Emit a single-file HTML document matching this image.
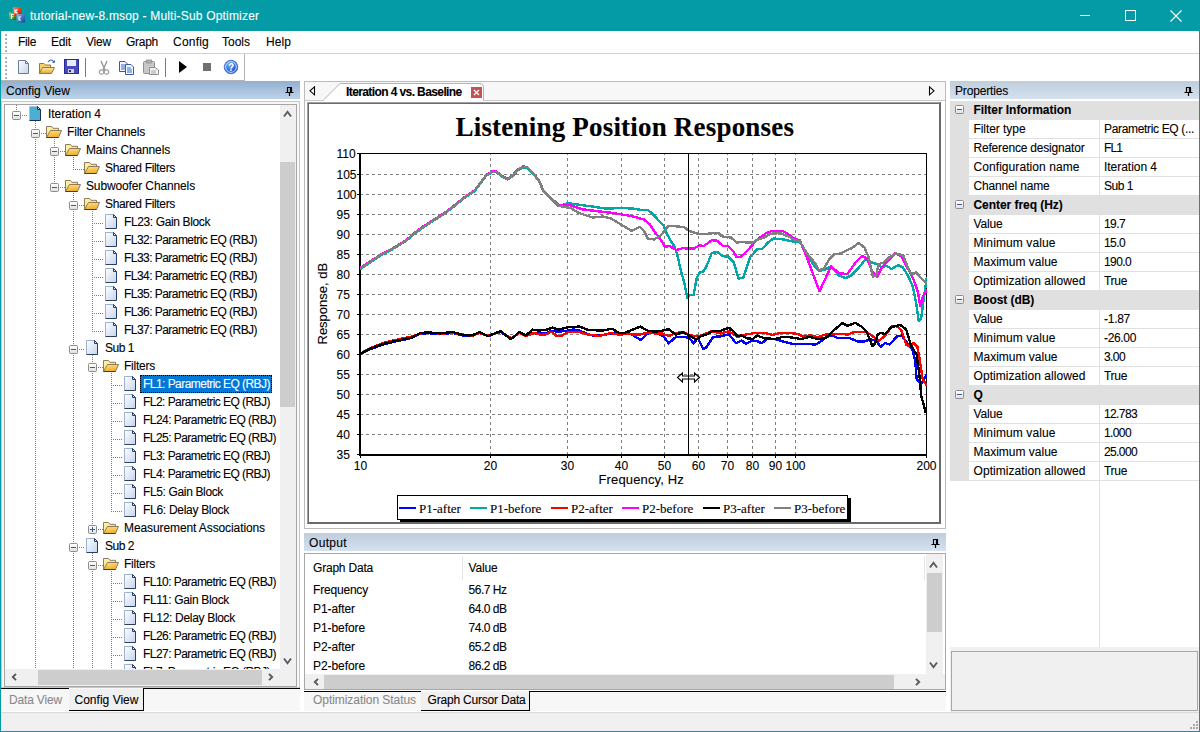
<!DOCTYPE html><html><head><meta charset="utf-8"><style>
html,body{margin:0;padding:0;}
body{width:1200px;height:732px;overflow:hidden;position:relative;background:#ffffff;font-family:"Liberation Sans",sans-serif;}
body>div,body>svg{position:absolute;}
.t{white-space:nowrap;-webkit-text-stroke:0.1px currentColor;}
</style></head><body>
<div style="left:0px;top:0px;width:1200px;height:31px;background:#049aa6;"></div>
<div style="left:0px;top:31px;width:1px;height:701px;background:#049aa6;"></div>
<div style="left:1199px;top:31px;width:1px;height:701px;background:#049aa6;"></div>
<div style="left:0px;top:731px;width:1200px;height:1px;background:#049aa6;"></div>
<svg style="left:8px;top:6px;" width="18" height="18" viewBox="0 0 18 18"><defs>
<linearGradient id="icr" x1="0" y1="0" x2="1" y2="1"><stop offset="0" stop-color="#ff9070"/><stop offset="0.5" stop-color="#e84020"/><stop offset="1" stop-color="#b02010"/></linearGradient>
<linearGradient id="icg" x1="0" y1="0" x2="1" y2="1"><stop offset="0" stop-color="#a8d860"/><stop offset="0.5" stop-color="#5a9a20"/><stop offset="1" stop-color="#2a6010"/></linearGradient>
<linearGradient id="icb" x1="0" y1="0" x2="1" y2="1"><stop offset="0" stop-color="#90c8f8"/><stop offset="0.5" stop-color="#3a78c8"/><stop offset="1" stop-color="#1a4890"/></linearGradient></defs>
<rect x="1" y="6.5" width="7.5" height="7.5" fill="url(#icg)"/>
<rect x="5" y="1.3" width="8.5" height="8" fill="url(#icr)"/>
<rect x="8.6" y="8.2" width="8.4" height="8.2" fill="url(#icb)"/>
<path d="M7 3.5 V7.5 M7 5.5 L9.5 3.5 M7.5 5.5 L9.5 7.5" stroke="#fff" stroke-width="1.1" fill="none"/>
<path d="M3.5 13 V8.5 H6 M3.5 10.8 H5.5" stroke="#fff" stroke-width="1.1" fill="none"/>
<path d="M13 11 H11 V14 H13" stroke="#fff" stroke-width="1.1" fill="none"/>
</svg>
<div class="t" style="left:30px;top:8.84px;font-size:12px;line-height:14px;color:#fff;font-weight:normal;font-family:'Liberation Sans', sans-serif;letter-spacing:0.190px;">tutorial-new-8.msop - Multi-Sub Optimizer</div>
<div style="left:1080px;top:15px;width:10px;height:1px;background:#fff;"></div>
<svg style="left:1125px;top:10px;" width="11" height="11" viewBox="0 0 11 11"><rect x="0.5" y="0.5" width="10" height="10" fill="none" stroke="#fff" stroke-width="1"/></svg>
<svg style="left:1170px;top:10px;" width="12" height="12" viewBox="0 0 12 12"><path d="M0.5 0.5 L11.5 11.5 M11.5 0.5 L0.5 11.5" stroke="#fff" stroke-width="1.1"/></svg>
<div style="left:1px;top:31px;width:1198px;height:22px;background:#ffffff;"></div>
<div style="left:1px;top:53px;width:1198px;height:1px;background:#d2d2d2;"></div>
<div style="left:5px;top:34px;width:2px;height:2px;background:#b8b8b8;"></div>
<div style="left:6px;top:35px;width:1px;height:1px;background:#909090;"></div>
<div style="left:5px;top:38px;width:2px;height:2px;background:#b8b8b8;"></div>
<div style="left:6px;top:39px;width:1px;height:1px;background:#909090;"></div>
<div style="left:5px;top:42px;width:2px;height:2px;background:#b8b8b8;"></div>
<div style="left:6px;top:43px;width:1px;height:1px;background:#909090;"></div>
<div style="left:5px;top:46px;width:2px;height:2px;background:#b8b8b8;"></div>
<div style="left:6px;top:47px;width:1px;height:1px;background:#909090;"></div>
<div style="left:5px;top:50px;width:2px;height:2px;background:#b8b8b8;"></div>
<div style="left:6px;top:51px;width:1px;height:1px;background:#909090;"></div>
<div class="t" style="left:18px;top:34.84px;font-size:12px;line-height:14px;color:#000;font-weight:normal;font-family:'Liberation Sans', sans-serif;letter-spacing:-0.336px;">File</div>
<div class="t" style="left:51px;top:34.84px;font-size:12px;line-height:14px;color:#000;font-weight:normal;font-family:'Liberation Sans', sans-serif;letter-spacing:-0.172px;">Edit</div>
<div class="t" style="left:86px;top:34.84px;font-size:12px;line-height:14px;color:#000;font-weight:normal;font-family:'Liberation Sans', sans-serif;letter-spacing:-0.199px;">View</div>
<div class="t" style="left:126px;top:34.84px;font-size:12px;line-height:14px;color:#000;font-weight:normal;font-family:'Liberation Sans', sans-serif;letter-spacing:-0.272px;">Graph</div>
<div class="t" style="left:173px;top:34.84px;font-size:12px;line-height:14px;color:#000;font-weight:normal;font-family:'Liberation Sans', sans-serif;letter-spacing:0.219px;">Config</div>
<div class="t" style="left:222px;top:34.84px;font-size:12px;line-height:14px;color:#000;font-weight:normal;font-family:'Liberation Sans', sans-serif;letter-spacing:-0.003px;">Tools</div>
<div class="t" style="left:266px;top:34.84px;font-size:12px;line-height:14px;color:#000;font-weight:normal;font-family:'Liberation Sans', sans-serif;letter-spacing:0.078px;">Help</div>
<div style="left:1px;top:54px;width:1198px;height:26px;background:#ffffff;"></div>
<div style="left:1px;top:80px;width:244px;height:1px;background:#b4b4b4;"></div>
<div style="left:244px;top:54px;width:1px;height:27px;background:#b4b4b4;"></div>
<div style="left:5px;top:57px;width:2px;height:2px;background:#b8b8b8;"></div>
<div style="left:6px;top:58px;width:1px;height:1px;background:#909090;"></div>
<div style="left:5px;top:61px;width:2px;height:2px;background:#b8b8b8;"></div>
<div style="left:6px;top:62px;width:1px;height:1px;background:#909090;"></div>
<div style="left:5px;top:65px;width:2px;height:2px;background:#b8b8b8;"></div>
<div style="left:6px;top:66px;width:1px;height:1px;background:#909090;"></div>
<div style="left:5px;top:69px;width:2px;height:2px;background:#b8b8b8;"></div>
<div style="left:6px;top:70px;width:1px;height:1px;background:#909090;"></div>
<div style="left:5px;top:73px;width:2px;height:2px;background:#b8b8b8;"></div>
<div style="left:6px;top:74px;width:1px;height:1px;background:#909090;"></div>
<div style="left:5px;top:77px;width:2px;height:2px;background:#b8b8b8;"></div>
<div style="left:6px;top:78px;width:1px;height:1px;background:#909090;"></div>
<div style="left:85px;top:58px;width:1px;height:19px;background:#7a7a7a;"></div>
<div style="left:165px;top:58px;width:1px;height:19px;background:#7a7a7a;"></div>
<svg style="left:17px;top:59px;" width="14" height="16" viewBox="0 0 14 16"><defs><linearGradient id="gd" x1="0" y1="0" x2="1" y2="1"><stop offset="0" stop-color="#ffffff"/><stop offset="1" stop-color="#c8d4e8"/></linearGradient></defs>
<path d="M1.5 1.5 H8.5 L11.5 4.5 V14.5 H1.5 Z" fill="url(#gd)" stroke="#6a7a98" stroke-width="1"/><path d="M8.5 1.5 V4.5 H11.5" fill="none" stroke="#6a7a98"/></svg>
<svg style="left:38px;top:58px;" width="18" height="17" viewBox="0 0 18 17"><defs><linearGradient id="gf" x1="0" y1="0" x2="0" y2="1"><stop offset="0" stop-color="#fde9a8"/><stop offset="1" stop-color="#e0a830"/></linearGradient></defs>
<path d="M1.5 5.5 H6 L7.5 7 H12.5 V15.5 H1.5 Z" fill="#f5d070" stroke="#a07828"/>
<path d="M1.5 15.5 L4.5 9.5 H16.5 L13.5 15.5 Z" fill="url(#gf)" stroke="#a07828"/>
<path d="M10 4 Q13 0 16 4" fill="none" stroke="#3a6ab0" stroke-width="1.2"/><path d="M14.5 4.5 L16.5 4.5 L16.5 2.5" fill="none" stroke="#3a6ab0"/></svg>
<svg style="left:64px;top:59px;" width="15" height="15" viewBox="0 0 15 15"><rect x="0.5" y="0.5" width="14" height="14" fill="#4848c0" stroke="#2a2a90"/><rect x="3" y="1" width="9" height="6" fill="#e8ecf8"/><rect x="4" y="10" width="6" height="4" fill="#d0d0e0"/><rect x="5" y="11" width="2" height="2" fill="#303050"/></svg>
<svg style="left:98px;top:60px;" width="12" height="15" viewBox="0 0 12 15"><path d="M3 1 L7 10 M9 1 L5 10" stroke="#909090" stroke-width="1.3"/><circle cx="3.5" cy="12" r="2.2" fill="none" stroke="#a0a0a0" stroke-width="1.2"/><circle cx="8.5" cy="12" r="2.2" fill="none" stroke="#a0a0a0" stroke-width="1.2"/></svg>
<svg style="left:118px;top:60px;" width="17" height="15" viewBox="0 0 17 15"><path d="M1.5 1.5 H7 L9.5 4 V11.5 H1.5 Z" fill="#f4f8ff" stroke="#3a5aa8"/><path d="M7.5 4.5 H13 L15.5 7 V14.5 H7.5 Z" fill="#f4f8ff" stroke="#3a5aa8"/>
<path d="M3 5 H7 M3 7 H7 M3 9 H7 M9 8 H13 M9 10 H14 M9 12 H14" stroke="#3a6ac8" stroke-width="1"/></svg>
<svg style="left:142px;top:59px;" width="18" height="16" viewBox="0 0 18 16"><rect x="1.5" y="2.5" width="11" height="12" rx="1" fill="#c8c8c8" stroke="#909090"/><rect x="4.5" y="1" width="5" height="3" fill="#b0b0b0" stroke="#909090" stroke-width="0.8"/><path d="M7.5 8.5 H13 L16.5 11 V15.5 H7.5 Z" fill="#f0f0f0" stroke="#909090"/><path d="M9 12 H14 M9 14 H14" stroke="#a8a8a8"/></svg>
<svg style="left:178px;top:60px;" width="10" height="14" viewBox="0 0 10 14"><path d="M1 1 L9 7 L1 13 Z" fill="#000"/></svg>
<div style="left:203px;top:63px;width:8px;height:8px;background:#707070;"></div>
<svg style="left:223px;top:59px;" width="16" height="16" viewBox="0 0 16 16"><defs><radialGradient id="gh" cx="0.4" cy="0.35" r="0.7"><stop offset="0" stop-color="#6aa8ff"/><stop offset="1" stop-color="#1040c0"/></radialGradient></defs>
<circle cx="8" cy="8" r="6.8" fill="url(#gh)" stroke="#3a70d0" stroke-width="0.8"/><circle cx="8" cy="8" r="5.4" fill="none" stroke="#e0ecff" stroke-width="0.9"/>
<text x="8" y="11.8" text-anchor="middle" font-size="10" font-weight="bold" fill="#fff" font-family="Liberation Sans">?</text></svg>
<div style="left:1px;top:81px;width:299px;height:18px;background:linear-gradient(#93b0d1,#bdd2ea);"></div>
<div class="t" style="left:6px;top:83.84px;font-size:12px;line-height:14px;color:#000;font-weight:normal;font-family:'Liberation Sans', sans-serif;letter-spacing:0.016px;">Config View</div>
<svg style="left:285px;top:87px;" width="9" height="9" viewBox="0 0 9 9"><path d="M2 0.5 H7 M2.5 0.5 V5 M6.5 0.5 V5 M5.5 0.5 V5 M0.5 5.5 H8.5 M4.5 5.5 V9" stroke="#000" stroke-width="1.2" fill="none"/></svg>
<div style="left:304px;top:533px;width:642px;height:18px;background:linear-gradient(#bfcddc,#d4e1ef);"></div>
<div class="t" style="left:309px;top:535.84px;font-size:12px;line-height:14px;color:#000;font-weight:normal;font-family:'Liberation Sans', sans-serif;letter-spacing:0.328px;">Output</div>
<svg style="left:931px;top:539px;" width="9" height="9" viewBox="0 0 9 9"><path d="M2 0.5 H7 M2.5 0.5 V5 M6.5 0.5 V5 M5.5 0.5 V5 M0.5 5.5 H8.5 M4.5 5.5 V9" stroke="#000" stroke-width="1.2" fill="none"/></svg>
<div style="left:950px;top:81px;width:249px;height:18px;background:linear-gradient(#bfcddc,#d4e1ef);"></div>
<div class="t" style="left:955px;top:83.84px;font-size:12px;line-height:14px;color:#000;font-weight:normal;font-family:'Liberation Sans', sans-serif;letter-spacing:-0.170px;">Properties</div>
<svg style="left:1184px;top:87px;" width="9" height="9" viewBox="0 0 9 9"><path d="M2 0.5 H7 M2.5 0.5 V5 M6.5 0.5 V5 M5.5 0.5 V5 M0.5 5.5 H8.5 M4.5 5.5 V9" stroke="#000" stroke-width="1.2" fill="none"/></svg>
<div style="left:1px;top:99px;width:299px;height:2px;background:#ffffff;"></div>
<div style="left:1px;top:101px;width:299px;height:587px;background:#f7f7f7;box-sizing:border-box;border:1px solid #c6c6c6;"></div>
<div style="left:4px;top:104px;width:293px;height:583px;background:#ffffff;box-sizing:border-box;border:1px solid #a5a5a5;"></div>
<div style="left:5px;top:105px;width:275px;height:564px;overflow:hidden;">
<div style="position:absolute;left:11px;top:0px;width:1px;height:11px;background:repeating-linear-gradient(#7c7c7c 0 1px,transparent 1px 2px)"></div>
<div style="position:absolute;left:30px;top:16px;width:1px;height:549px;background:repeating-linear-gradient(#7c7c7c 0 1px,transparent 1px 2px)"></div>
<div style="position:absolute;left:49px;top:34px;width:1px;height:49px;background:repeating-linear-gradient(#7c7c7c 0 1px,transparent 1px 2px)"></div>
<div style="position:absolute;left:68px;top:52px;width:1px;height:13px;background:repeating-linear-gradient(#7c7c7c 0 1px,transparent 1px 2px)"></div>
<div style="position:absolute;left:68px;top:88px;width:1px;height:477px;background:repeating-linear-gradient(#7c7c7c 0 1px,transparent 1px 2px)"></div>
<div style="position:absolute;left:87px;top:106px;width:1px;height:121px;background:repeating-linear-gradient(#7c7c7c 0 1px,transparent 1px 2px)"></div>
<div style="position:absolute;left:87px;top:250px;width:1px;height:175px;background:repeating-linear-gradient(#7c7c7c 0 1px,transparent 1px 2px)"></div>
<div style="position:absolute;left:87px;top:448px;width:1px;height:117px;background:repeating-linear-gradient(#7c7c7c 0 1px,transparent 1px 2px)"></div>
<div style="position:absolute;left:106px;top:268px;width:1px;height:139px;background:repeating-linear-gradient(#7c7c7c 0 1px,transparent 1px 2px)"></div>
<div style="position:absolute;left:106px;top:466px;width:1px;height:99px;background:repeating-linear-gradient(#7c7c7c 0 1px,transparent 1px 2px)"></div>
<div style="position:absolute;left:17px;top:10px;width:6px;height:1px;background:repeating-linear-gradient(90deg,#7c7c7c 0 1px,transparent 1px 2px)"></div>
<div style="position:absolute;left:36px;top:28px;width:6px;height:1px;background:repeating-linear-gradient(90deg,#7c7c7c 0 1px,transparent 1px 2px)"></div>
<div style="position:absolute;left:55px;top:46px;width:6px;height:1px;background:repeating-linear-gradient(90deg,#7c7c7c 0 1px,transparent 1px 2px)"></div>
<div style="position:absolute;left:68px;top:64px;width:12px;height:1px;background:repeating-linear-gradient(90deg,#7c7c7c 0 1px,transparent 1px 2px)"></div>
<div style="position:absolute;left:55px;top:82px;width:6px;height:1px;background:repeating-linear-gradient(90deg,#7c7c7c 0 1px,transparent 1px 2px)"></div>
<div style="position:absolute;left:74px;top:100px;width:6px;height:1px;background:repeating-linear-gradient(90deg,#7c7c7c 0 1px,transparent 1px 2px)"></div>
<div style="position:absolute;left:87px;top:118px;width:12px;height:1px;background:repeating-linear-gradient(90deg,#7c7c7c 0 1px,transparent 1px 2px)"></div>
<div style="position:absolute;left:87px;top:136px;width:12px;height:1px;background:repeating-linear-gradient(90deg,#7c7c7c 0 1px,transparent 1px 2px)"></div>
<div style="position:absolute;left:87px;top:154px;width:12px;height:1px;background:repeating-linear-gradient(90deg,#7c7c7c 0 1px,transparent 1px 2px)"></div>
<div style="position:absolute;left:87px;top:172px;width:12px;height:1px;background:repeating-linear-gradient(90deg,#7c7c7c 0 1px,transparent 1px 2px)"></div>
<div style="position:absolute;left:87px;top:190px;width:12px;height:1px;background:repeating-linear-gradient(90deg,#7c7c7c 0 1px,transparent 1px 2px)"></div>
<div style="position:absolute;left:87px;top:208px;width:12px;height:1px;background:repeating-linear-gradient(90deg,#7c7c7c 0 1px,transparent 1px 2px)"></div>
<div style="position:absolute;left:87px;top:226px;width:12px;height:1px;background:repeating-linear-gradient(90deg,#7c7c7c 0 1px,transparent 1px 2px)"></div>
<div style="position:absolute;left:74px;top:244px;width:6px;height:1px;background:repeating-linear-gradient(90deg,#7c7c7c 0 1px,transparent 1px 2px)"></div>
<div style="position:absolute;left:93px;top:262px;width:6px;height:1px;background:repeating-linear-gradient(90deg,#7c7c7c 0 1px,transparent 1px 2px)"></div>
<div style="position:absolute;left:106px;top:280px;width:12px;height:1px;background:repeating-linear-gradient(90deg,#7c7c7c 0 1px,transparent 1px 2px)"></div>
<div style="position:absolute;left:106px;top:298px;width:12px;height:1px;background:repeating-linear-gradient(90deg,#7c7c7c 0 1px,transparent 1px 2px)"></div>
<div style="position:absolute;left:106px;top:316px;width:12px;height:1px;background:repeating-linear-gradient(90deg,#7c7c7c 0 1px,transparent 1px 2px)"></div>
<div style="position:absolute;left:106px;top:334px;width:12px;height:1px;background:repeating-linear-gradient(90deg,#7c7c7c 0 1px,transparent 1px 2px)"></div>
<div style="position:absolute;left:106px;top:352px;width:12px;height:1px;background:repeating-linear-gradient(90deg,#7c7c7c 0 1px,transparent 1px 2px)"></div>
<div style="position:absolute;left:106px;top:370px;width:12px;height:1px;background:repeating-linear-gradient(90deg,#7c7c7c 0 1px,transparent 1px 2px)"></div>
<div style="position:absolute;left:106px;top:388px;width:12px;height:1px;background:repeating-linear-gradient(90deg,#7c7c7c 0 1px,transparent 1px 2px)"></div>
<div style="position:absolute;left:106px;top:406px;width:12px;height:1px;background:repeating-linear-gradient(90deg,#7c7c7c 0 1px,transparent 1px 2px)"></div>
<div style="position:absolute;left:93px;top:424px;width:6px;height:1px;background:repeating-linear-gradient(90deg,#7c7c7c 0 1px,transparent 1px 2px)"></div>
<div style="position:absolute;left:74px;top:442px;width:6px;height:1px;background:repeating-linear-gradient(90deg,#7c7c7c 0 1px,transparent 1px 2px)"></div>
<div style="position:absolute;left:93px;top:460px;width:6px;height:1px;background:repeating-linear-gradient(90deg,#7c7c7c 0 1px,transparent 1px 2px)"></div>
<div style="position:absolute;left:106px;top:478px;width:12px;height:1px;background:repeating-linear-gradient(90deg,#7c7c7c 0 1px,transparent 1px 2px)"></div>
<div style="position:absolute;left:106px;top:496px;width:12px;height:1px;background:repeating-linear-gradient(90deg,#7c7c7c 0 1px,transparent 1px 2px)"></div>
<div style="position:absolute;left:106px;top:514px;width:12px;height:1px;background:repeating-linear-gradient(90deg,#7c7c7c 0 1px,transparent 1px 2px)"></div>
<div style="position:absolute;left:106px;top:532px;width:12px;height:1px;background:repeating-linear-gradient(90deg,#7c7c7c 0 1px,transparent 1px 2px)"></div>
<div style="position:absolute;left:106px;top:550px;width:12px;height:1px;background:repeating-linear-gradient(90deg,#7c7c7c 0 1px,transparent 1px 2px)"></div>
<div style="position:absolute;left:106px;top:568px;width:12px;height:1px;background:repeating-linear-gradient(90deg,#7c7c7c 0 1px,transparent 1px 2px)"></div>
<svg style="position:absolute;left:-5px;top:-105px" width="300" height="700"><defs>
<linearGradient id="gdoc" x1="0" y1="0" x2="1" y2="1"><stop offset="0" stop-color="#ffffff"/><stop offset="1" stop-color="#c4d4ee"/></linearGradient>
<linearGradient id="gfold" x1="0" y1="0" x2="0" y2="1"><stop offset="0" stop-color="#fff0b8"/><stop offset="1" stop-color="#e4a830"/></linearGradient>
<linearGradient id="gbox" x1="0" y1="0" x2="0" y2="1"><stop offset="0" stop-color="#ffffff"/><stop offset="1" stop-color="#e0e0e0"/></linearGradient>
<linearGradient id="gfront" x1="0" y1="0" x2="0.3" y2="1"><stop offset="0" stop-color="#ffe38a"/><stop offset="1" stop-color="#f2ae2a"/></linearGradient>
<linearGradient id="gback" x1="0" y1="0" x2="1" y2="1"><stop offset="0" stop-color="#fff5b0"/><stop offset="1" stop-color="#f5d560"/></linearGradient>
<symbol id="doc" viewBox="0 0 12 15"><path d="M0.5 0.5 H8.5 L11.5 3.5 V14.5 H0.5 Z" fill="url(#gdoc)" stroke="#9cb0d0"/><path d="M11.5 3.5 V14.5 H0.5" fill="none" stroke="#2e3e60"/><path d="M8.5 0.5 V3.5 H11.5 Z" fill="#dfe8f8" stroke="#2e3e60"/></symbol>
<symbol id="docb" viewBox="0 0 12 15"><path d="M0.5 0.5 H8.5 L11.5 3.5 V14.5 H0.5 Z" fill="#4bafd2" stroke="#aac4de"/><path d="M11.5 3.5 V14.5 H0.5" fill="none" stroke="#1e3050"/><path d="M8.5 0.5 V3.5 H11.5 Z" fill="#c8e0f0" stroke="#1e3050"/></symbol>
<symbol id="folder" viewBox="0 0 17 12"><path d="M0.5 11.5 V0.5 H5.5 L7 2.3 H12.5 V5" fill="url(#gback)" stroke="#8c7c5c"/><path d="M4.5 4.5 H15.5 L12.5 11.5 H0.5 Z" fill="url(#gfront)" stroke="#8c7c5c"/><path d="M0.5 11.5 H12.5" stroke="#4a3a20"/></symbol>
</defs><rect x="12.5" y="111.5" width="8" height="8" rx="1" fill="url(#gbox)" stroke="#8c8c8c"/><rect x="14" y="115" width="5" height="1" fill="#3858a8"/><use href="#docb" x="29" y="106" width="12" height="15"/><rect x="31.5" y="129.5" width="8" height="8" rx="1" fill="url(#gbox)" stroke="#8c8c8c"/><rect x="33" y="133" width="5" height="1" fill="#3858a8"/><use href="#folder" x="46" y="126" width="17" height="12"/><rect x="50.5" y="147.5" width="8" height="8" rx="1" fill="url(#gbox)" stroke="#8c8c8c"/><rect x="52" y="151" width="5" height="1" fill="#3858a8"/><use href="#folder" x="65" y="144" width="17" height="12"/><use href="#folder" x="84" y="162" width="17" height="12"/><rect x="50.5" y="183.5" width="8" height="8" rx="1" fill="url(#gbox)" stroke="#8c8c8c"/><rect x="52" y="187" width="5" height="1" fill="#3858a8"/><use href="#folder" x="65" y="180" width="17" height="12"/><rect x="69.5" y="201.5" width="8" height="8" rx="1" fill="url(#gbox)" stroke="#8c8c8c"/><rect x="71" y="205" width="5" height="1" fill="#3858a8"/><use href="#folder" x="84" y="198" width="17" height="12"/><use href="#doc" x="105" y="214" width="12" height="15"/><use href="#doc" x="105" y="232" width="12" height="15"/><use href="#doc" x="105" y="250" width="12" height="15"/><use href="#doc" x="105" y="268" width="12" height="15"/><use href="#doc" x="105" y="286" width="12" height="15"/><use href="#doc" x="105" y="304" width="12" height="15"/><use href="#doc" x="105" y="322" width="12" height="15"/><rect x="69.5" y="345.5" width="8" height="8" rx="1" fill="url(#gbox)" stroke="#8c8c8c"/><rect x="71" y="349" width="5" height="1" fill="#3858a8"/><use href="#doc" x="86" y="340" width="12" height="15"/><rect x="88.5" y="363.5" width="8" height="8" rx="1" fill="url(#gbox)" stroke="#8c8c8c"/><rect x="90" y="367" width="5" height="1" fill="#3858a8"/><use href="#folder" x="103" y="360" width="17" height="12"/><use href="#doc" x="124" y="376" width="12" height="15"/><use href="#doc" x="124" y="394" width="12" height="15"/><use href="#doc" x="124" y="412" width="12" height="15"/><use href="#doc" x="124" y="430" width="12" height="15"/><use href="#doc" x="124" y="448" width="12" height="15"/><use href="#doc" x="124" y="466" width="12" height="15"/><use href="#doc" x="124" y="484" width="12" height="15"/><use href="#doc" x="124" y="502" width="12" height="15"/><rect x="88.5" y="525.5" width="8" height="8" rx="1" fill="url(#gbox)" stroke="#8c8c8c"/><rect x="90" y="529" width="5" height="1" fill="#3858a8"/><rect x="92" y="527" width="1" height="5" fill="#3858a8"/><use href="#folder" x="103" y="522" width="17" height="12"/><rect x="69.5" y="543.5" width="8" height="8" rx="1" fill="url(#gbox)" stroke="#8c8c8c"/><rect x="71" y="547" width="5" height="1" fill="#3858a8"/><use href="#doc" x="86" y="538" width="12" height="15"/><rect x="88.5" y="561.5" width="8" height="8" rx="1" fill="url(#gbox)" stroke="#8c8c8c"/><rect x="90" y="565" width="5" height="1" fill="#3858a8"/><use href="#folder" x="103" y="558" width="17" height="12"/><use href="#doc" x="124" y="574" width="12" height="15"/><use href="#doc" x="124" y="592" width="12" height="15"/><use href="#doc" x="124" y="610" width="12" height="15"/><use href="#doc" x="124" y="628" width="12" height="15"/><use href="#doc" x="124" y="646" width="12" height="15"/><use href="#doc" x="124" y="664" width="12" height="15"/></svg>
<div class="t" style="position:absolute;left:43px;top:2px;font-size:12px;line-height:14px;color:#000;letter-spacing:-0.034px">Iteration 4</div>
<div class="t" style="position:absolute;left:62px;top:20px;font-size:12px;line-height:14px;color:#000;letter-spacing:-0.180px">Filter Channels</div>
<div class="t" style="position:absolute;left:81px;top:38px;font-size:12px;line-height:14px;color:#000;letter-spacing:-0.146px">Mains Channels</div>
<div class="t" style="position:absolute;left:100px;top:56px;font-size:12px;line-height:14px;color:#000;letter-spacing:-0.336px">Shared Filters</div>
<div class="t" style="position:absolute;left:81px;top:74px;font-size:12px;line-height:14px;color:#000;letter-spacing:-0.134px">Subwoofer Channels</div>
<div class="t" style="position:absolute;left:100px;top:92px;font-size:12px;line-height:14px;color:#000;letter-spacing:-0.336px">Shared Filters</div>
<div class="t" style="position:absolute;left:119px;top:110px;font-size:12px;line-height:14px;color:#000;letter-spacing:-0.378px">FL23: Gain Block</div>
<div class="t" style="position:absolute;left:119px;top:128px;font-size:12px;line-height:14px;color:#000;letter-spacing:-0.548px">FL32: Parametric EQ (RBJ)</div>
<div class="t" style="position:absolute;left:119px;top:146px;font-size:12px;line-height:14px;color:#000;letter-spacing:-0.548px">FL33: Parametric EQ (RBJ)</div>
<div class="t" style="position:absolute;left:119px;top:164px;font-size:12px;line-height:14px;color:#000;letter-spacing:-0.548px">FL34: Parametric EQ (RBJ)</div>
<div class="t" style="position:absolute;left:119px;top:182px;font-size:12px;line-height:14px;color:#000;letter-spacing:-0.548px">FL35: Parametric EQ (RBJ)</div>
<div class="t" style="position:absolute;left:119px;top:200px;font-size:12px;line-height:14px;color:#000;letter-spacing:-0.548px">FL36: Parametric EQ (RBJ)</div>
<div class="t" style="position:absolute;left:119px;top:218px;font-size:12px;line-height:14px;color:#000;letter-spacing:-0.548px">FL37: Parametric EQ (RBJ)</div>
<div class="t" style="position:absolute;left:100px;top:236px;font-size:12px;line-height:14px;color:#000;letter-spacing:-0.472px">Sub 1</div>
<div class="t" style="position:absolute;left:119px;top:254px;font-size:12px;line-height:14px;color:#000;letter-spacing:-0.239px">Filters</div>
<div style="position:absolute;left:135px;top:269.5px;width:132px;height:18px;background:#0078d7;box-sizing:border-box;border:1px dotted #000;"></div>
<div class="t" style="position:absolute;left:138px;top:272px;font-size:12px;line-height:14px;color:#fff;letter-spacing:-0.543px">FL1: Parametric EQ (RBJ)</div>
<div class="t" style="position:absolute;left:138px;top:290px;font-size:12px;line-height:14px;color:#000;letter-spacing:-0.543px">FL2: Parametric EQ (RBJ)</div>
<div class="t" style="position:absolute;left:138px;top:308px;font-size:12px;line-height:14px;color:#000;letter-spacing:-0.548px">FL24: Parametric EQ (RBJ)</div>
<div class="t" style="position:absolute;left:138px;top:326px;font-size:12px;line-height:14px;color:#000;letter-spacing:-0.548px">FL25: Parametric EQ (RBJ)</div>
<div class="t" style="position:absolute;left:138px;top:344px;font-size:12px;line-height:14px;color:#000;letter-spacing:-0.543px">FL3: Parametric EQ (RBJ)</div>
<div class="t" style="position:absolute;left:138px;top:362px;font-size:12px;line-height:14px;color:#000;letter-spacing:-0.543px">FL4: Parametric EQ (RBJ)</div>
<div class="t" style="position:absolute;left:138px;top:380px;font-size:12px;line-height:14px;color:#000;letter-spacing:-0.358px">FL5: Gain Block</div>
<div class="t" style="position:absolute;left:138px;top:398px;font-size:12px;line-height:14px;color:#000;letter-spacing:-0.294px">FL6: Delay Block</div>
<div class="t" style="position:absolute;left:119px;top:416px;font-size:12px;line-height:14px;color:#000;letter-spacing:-0.100px">Measurement Associations</div>
<div class="t" style="position:absolute;left:100px;top:434px;font-size:12px;line-height:14px;color:#000;letter-spacing:-0.472px">Sub 2</div>
<div class="t" style="position:absolute;left:119px;top:452px;font-size:12px;line-height:14px;color:#000;letter-spacing:-0.239px">Filters</div>
<div class="t" style="position:absolute;left:138px;top:470px;font-size:12px;line-height:14px;color:#000;letter-spacing:-0.548px">FL10: Parametric EQ (RBJ)</div>
<div class="t" style="position:absolute;left:138px;top:488px;font-size:12px;line-height:14px;color:#000;letter-spacing:-0.322px">FL11: Gain Block</div>
<div class="t" style="position:absolute;left:138px;top:506px;font-size:12px;line-height:14px;color:#000;letter-spacing:-0.317px">FL12: Delay Block</div>
<div class="t" style="position:absolute;left:138px;top:524px;font-size:12px;line-height:14px;color:#000;letter-spacing:-0.548px">FL26: Parametric EQ (RBJ)</div>
<div class="t" style="position:absolute;left:138px;top:542px;font-size:12px;line-height:14px;color:#000;letter-spacing:-0.548px">FL27: Parametric EQ (RBJ)</div>
<div class="t" style="position:absolute;left:138px;top:560px;font-size:12px;line-height:14px;color:#000;letter-spacing:-0.543px">FL7: Parametric EQ (RBJ)</div>
</div>
<div style="left:280px;top:105px;width:16px;height:564px;background:#f0f0f0;"></div>
<div style="left:280px;top:162px;width:15px;height:245px;background:#cdcdcd;"></div>
<svg style="left:283px;top:110px;" width="9" height="8" viewBox="0 0 9 8"><path d="M1 6.5 L4.5 1.8 L8 6.5" fill="none" stroke="#5a5a5a" stroke-width="1.9"/></svg>
<svg style="left:283px;top:657px;" width="9" height="8" viewBox="0 0 9 8"><path d="M1 1.5 L4.5 6.2 L8 1.5" fill="none" stroke="#5a5a5a" stroke-width="1.9"/></svg>
<div style="left:5px;top:669px;width:291px;height:17px;background:#f0f0f0;"></div>
<div style="left:38px;top:670px;width:224px;height:15px;background:#cdcdcd;"></div>
<svg style="left:11px;top:673px;" width="6" height="8" viewBox="0 0 6 8"><path d="M5 0.8 L1.8 4 L5 7.2" fill="none" stroke="#5a5a5a" stroke-width="1.9"/></svg>
<svg style="left:268px;top:673px;" width="6" height="8" viewBox="0 0 6 8"><path d="M1 0.8 L4.2 4 L1 7.2" fill="none" stroke="#5a5a5a" stroke-width="1.9"/></svg>
<div style="left:1px;top:688px;width:299px;height:23px;background:#f7f7f7;"></div>
<div style="left:1px;top:688px;width:68px;height:1px;background:#000;"></div>
<div style="left:143px;top:688px;width:157px;height:1px;background:#000;"></div>
<div style="left:69px;top:689px;width:75px;height:22px;background:#f0f0f0;box-sizing:border-box;border-right:1px solid #000;border-bottom:1px solid #000;"></div>
<div class="t" style="left:9px;top:693.34px;font-size:12px;line-height:14px;color:#8a8a8a;font-weight:normal;font-family:'Liberation Sans', sans-serif;letter-spacing:-0.165px;">Data View</div>
<div class="t" style="left:74.5px;top:693.34px;font-size:12px;line-height:14px;color:#000;font-weight:normal;font-family:'Liberation Sans', sans-serif;letter-spacing:0.016px;">Config View</div>
<div style="left:304px;top:81px;width:642px;height:448px;background:#f7f7f7;box-sizing:border-box;border:1px solid #bcbcbc;"></div>
<div style="left:305px;top:100px;width:640px;height:1px;background:#c8c8c8;"></div>
<div style="left:305px;top:101px;width:640px;height:427px;background:#ffffff;"></div>
<svg style="left:309px;top:86px;" width="7" height="10" viewBox="0 0 7 10"><path d="M5.5 0.8 L1 4.8 L5.5 8.8 Z" fill="#fff" stroke="#000" stroke-width="1.1"/></svg>
<svg style="left:928px;top:86px;" width="7" height="10" viewBox="0 0 7 10"><path d="M1.5 0.8 L6 4.8 L1.5 8.8 Z" fill="#fff" stroke="#000" stroke-width="1.1"/></svg>
<svg style="left:320px;top:82px;" width="170" height="20" viewBox="0 0 170 20"><path d="M3 18.5 L20 1.5 H160 Q163.5 1.5 163.5 5 V18.5" fill="#ffffff" stroke="#b4b4b4" stroke-width="1"/><rect x="4" y="18" width="159" height="3" fill="#fff"/></svg>
<div class="t" style="left:346px;top:85.14px;font-size:12px;line-height:14px;color:#000;font-weight:bold;font-family:'Liberation Sans', sans-serif;letter-spacing:-0.600px;">Iteration 4 vs. Baseline</div>
<div style="left:471px;top:87px;width:11px;height:11px;background:#c75050;"></div>
<svg style="left:471px;top:87px;" width="11" height="11" viewBox="0 0 11 11"><path d="M3 3 L8 8 M8 3 L3 8" stroke="#fff" stroke-width="1.3"/></svg>
<div style="left:307px;top:102px;width:634px;height:422px;background:#ffffff;box-sizing:border-box;border:2px solid #6a6a6a;"></div>
<div style="left:307px;top:102px;width:633px;height:1px;background:#a0a0a0;"></div>
<div style="left:307px;top:102px;width:1px;height:421px;background:#a0a0a0;"></div>
<svg style="left:0;top:0" width="1200" height="732" viewBox="0 0 1200 732"><line x1="361" y1="434.5" x2="926" y2="434.5" stroke="#808080" stroke-width="1" stroke-dasharray="3,3" stroke-dashoffset="1"/><line x1="361" y1="414.5" x2="926" y2="414.5" stroke="#808080" stroke-width="1" stroke-dasharray="3,3" stroke-dashoffset="1"/><line x1="361" y1="394.5" x2="926" y2="394.5" stroke="#808080" stroke-width="1" stroke-dasharray="3,3" stroke-dashoffset="1"/><line x1="361" y1="374.5" x2="926" y2="374.5" stroke="#808080" stroke-width="1" stroke-dasharray="3,3" stroke-dashoffset="1"/><line x1="361" y1="354.5" x2="926" y2="354.5" stroke="#808080" stroke-width="1" stroke-dasharray="3,3" stroke-dashoffset="1"/><line x1="361" y1="334.5" x2="926" y2="334.5" stroke="#808080" stroke-width="1" stroke-dasharray="3,3" stroke-dashoffset="1"/><line x1="361" y1="314.5" x2="926" y2="314.5" stroke="#808080" stroke-width="1" stroke-dasharray="3,3" stroke-dashoffset="1"/><line x1="361" y1="294.5" x2="926" y2="294.5" stroke="#808080" stroke-width="1" stroke-dasharray="3,3" stroke-dashoffset="1"/><line x1="361" y1="274.5" x2="926" y2="274.5" stroke="#808080" stroke-width="1" stroke-dasharray="3,3" stroke-dashoffset="1"/><line x1="361" y1="254.5" x2="926" y2="254.5" stroke="#808080" stroke-width="1" stroke-dasharray="3,3" stroke-dashoffset="1"/><line x1="361" y1="234.5" x2="926" y2="234.5" stroke="#808080" stroke-width="1" stroke-dasharray="3,3" stroke-dashoffset="1"/><line x1="361" y1="214.5" x2="926" y2="214.5" stroke="#808080" stroke-width="1" stroke-dasharray="3,3" stroke-dashoffset="1"/><line x1="361" y1="194.5" x2="926" y2="194.5" stroke="#808080" stroke-width="1" stroke-dasharray="3,3" stroke-dashoffset="1"/><line x1="361" y1="174.5" x2="926" y2="174.5" stroke="#808080" stroke-width="1" stroke-dasharray="3,3" stroke-dashoffset="1"/><line x1="490.5" y1="154" x2="490.5" y2="454" stroke="#808080" stroke-width="1" stroke-dasharray="3,3" stroke-dashoffset="2"/><line x1="567.5" y1="154" x2="567.5" y2="454" stroke="#808080" stroke-width="1" stroke-dasharray="3,3" stroke-dashoffset="2"/><line x1="621.5" y1="154" x2="621.5" y2="454" stroke="#808080" stroke-width="1" stroke-dasharray="3,3" stroke-dashoffset="2"/><line x1="664.5" y1="154" x2="664.5" y2="454" stroke="#808080" stroke-width="1" stroke-dasharray="3,3" stroke-dashoffset="2"/><line x1="698.5" y1="154" x2="698.5" y2="454" stroke="#808080" stroke-width="1" stroke-dasharray="3,3" stroke-dashoffset="2"/><line x1="727.5" y1="154" x2="727.5" y2="454" stroke="#808080" stroke-width="1" stroke-dasharray="3,3" stroke-dashoffset="2"/><line x1="752.5" y1="154" x2="752.5" y2="454" stroke="#808080" stroke-width="1" stroke-dasharray="3,3" stroke-dashoffset="2"/><line x1="775.5" y1="154" x2="775.5" y2="454" stroke="#808080" stroke-width="1" stroke-dasharray="3,3" stroke-dashoffset="2"/><line x1="795.5" y1="154" x2="795.5" y2="454" stroke="#808080" stroke-width="1" stroke-dasharray="3,3" stroke-dashoffset="2"/><rect x="359" y="153" width="568" height="1" fill="#000"/><rect x="926" y="153" width="1" height="303" fill="#000"/><rect x="359" y="153" width="2" height="303" fill="#000"/><rect x="359" y="454" width="568" height="2" fill="#000"/><rect x="357" y="454" width="2" height="1" fill="#000"/><rect x="357" y="434" width="2" height="1" fill="#000"/><rect x="357" y="414" width="2" height="1" fill="#000"/><rect x="357" y="394" width="2" height="1" fill="#000"/><rect x="357" y="374" width="2" height="1" fill="#000"/><rect x="357" y="354" width="2" height="1" fill="#000"/><rect x="357" y="334" width="2" height="1" fill="#000"/><rect x="357" y="314" width="2" height="1" fill="#000"/><rect x="357" y="294" width="2" height="1" fill="#000"/><rect x="357" y="274" width="2" height="1" fill="#000"/><rect x="357" y="254" width="2" height="1" fill="#000"/><rect x="357" y="234" width="2" height="1" fill="#000"/><rect x="357" y="214" width="2" height="1" fill="#000"/><rect x="357" y="194" width="2" height="1" fill="#000"/><rect x="357" y="174" width="2" height="1" fill="#000"/><rect x="357" y="153" width="2" height="1" fill="#000"/><rect x="360" y="456" width="1" height="2" fill="#000"/><rect x="490" y="456" width="1" height="2" fill="#000"/><rect x="567" y="456" width="1" height="2" fill="#000"/><rect x="621" y="456" width="1" height="2" fill="#000"/><rect x="664" y="456" width="1" height="2" fill="#000"/><rect x="698" y="456" width="1" height="2" fill="#000"/><rect x="727" y="456" width="1" height="2" fill="#000"/><rect x="752" y="456" width="1" height="2" fill="#000"/><rect x="775" y="456" width="1" height="2" fill="#000"/><rect x="795" y="456" width="1" height="2" fill="#000"/><rect x="926" y="456" width="1" height="2" fill="#000"/><defs><clipPath id="plot"><rect x="360" y="153" width="567" height="303"/></clipPath></defs><g clip-path="url(#plot)"><polyline points="360.0,354.0 369.2,349.5 383.3,344.5 397.5,341.0 411.7,338.0 420.2,333.5 428.7,333.2 440.0,334.0 452.7,333.0 462.6,335.5 468.3,336.0 472.6,335.8 479.6,332.5 488.1,336.2 496.6,333.0 500.9,332.0 509.4,338.0 512.2,338.0 519.3,333.0 525.7,335.5 534.2,332.7 545.5,333.4 551.2,330.9 558.2,331.7 566.7,330.9 573.8,329.4 579.5,330.6 588.0,334.1 595.1,336.0 610.7,333.7 619.2,333.1 627.6,332.7 633.3,335.5 641.1,340.2 647.5,333.4 654.6,332.7 663.1,336.0 668.7,343.3 675.8,337.0 682.9,337.0 689.2,337.6 693.5,343.3 697.7,338.3 703.4,349.0 706.2,347.5 713.3,336.9 721.8,336.2 728.9,334.1 736.0,343.3 741.7,340.5 745.9,344.0 751.6,340.9 757.2,341.2 761.5,343.3 767.2,339.0 775.7,339.0 784.2,341.9 792.6,344.0 809.6,344.0 815.3,344.7 821.0,341.2 826.6,336.9 832.3,335.5 838.0,338.3 849.0,337.8 858.0,341.6 864.1,341.6 870.1,339.3 876.1,340.8 880.6,346.8 885.1,343.1 889.6,344.6 897.1,336.3 901.7,335.6 906.2,341.6 912.2,349.1 915.2,361.1 916.7,379.2 921.2,383.7 926.5,374.7" fill="none" stroke="#0000ff" stroke-width="2.4" stroke-linejoin="round" stroke-linecap="round" shape-rendering="crispEdges"/><polyline points="360.1,269.1 370.0,262.4 380.6,255.4 393.0,248.9 406.3,240.8 415.0,233.4 423.3,227.2 433.0,220.9 443.8,214.3 454.0,206.4 464.3,198.1 474.6,191.3 480.0,184.1 486.1,175.9 492.3,172.2 496.4,172.2 502.5,176.9 507.7,179.6 512.8,175.9 517.9,170.2 523.0,167.3 527.1,167.8 533.3,173.8 539.4,182.0 543.5,191.3 549.7,197.4 558.9,206.2 568.1,203.2 578.4,204.6 592.7,206.6 607.0,208.7 621.4,207.9 633.7,208.7 643.9,210.3 648.0,209.9 654.2,215.5 660.0,222.1 663.4,225.5 666.8,233.7 670.9,241.2 674.3,246.0 677.1,254.2 680.5,269.2 684.6,284.2 687.3,297.9 690.1,295.2 693.5,295.2 696.9,277.4 699.6,272.6 703.0,271.9 706.4,266.5 711.9,252.8 717.4,252.1 722.8,256.2 728.3,256.6 733.8,262.4 738.6,278.8 743.3,277.4 746.1,269.2 750.2,256.9 757.0,249.4 762.5,248.7 767.9,242.6 773.4,238.5 778.9,238.9 785.7,239.8 791.1,241.2 799.8,242.0 806.4,252.7 813.0,264.2 818.7,270.7 824.4,269.9 831.0,266.6 839.2,275.7 845.7,278.1 850.7,275.7 858.9,267.5 865.4,259.3 872.0,262.5 876.9,264.2 881.8,267.5 886.7,265.8 891.6,269.1 898.2,265.0 903.1,267.5 908.0,275.7 913.0,287.1 916.2,303.5 918.7,320.7 921.1,318.3 923.6,300.2 926.6,278.1" fill="none" stroke="#00a8a8" stroke-width="2.4" stroke-linejoin="round" stroke-linecap="round" shape-rendering="crispEdges"/><polyline points="360.0,354.0 369.2,348.5 383.3,343.0 397.5,339.5 411.7,336.5 420.2,333.5 428.7,332.6 440.0,333.6 452.7,333.0 462.6,334.5 468.3,335.5 472.6,335.5 479.6,333.0 488.1,335.8 496.6,333.0 500.9,332.0 509.4,337.5 512.2,337.8 519.3,333.0 525.7,336.0 534.2,333.1 541.2,334.8 545.5,334.5 551.2,331.7 556.8,336.0 561.1,336.0 568.2,332.0 579.5,332.0 588.0,334.5 599.3,336.0 610.7,333.1 619.2,334.8 627.6,333.7 633.3,334.5 640.4,334.5 647.5,332.7 654.6,333.4 661.6,333.4 668.7,336.0 675.8,333.1 682.9,332.0 690.7,335.5 699.2,336.2 711.9,331.2 720.4,333.4 728.9,331.2 737.4,336.9 744.5,334.8 755.8,332.9 764.3,332.9 772.8,334.8 781.3,332.7 789.8,332.7 798.3,334.1 804.0,336.9 809.6,335.2 818.1,337.2 826.6,334.1 833.7,333.8 843.6,334.1 847.5,334.8 855.0,331.8 866.3,331.8 876.1,338.6 879.1,340.8 885.1,335.6 892.6,325.8 897.9,326.5 901.7,331.1 906.2,344.6 909.2,346.1 913.7,343.1 917.4,346.8 919.7,359.6 922.7,379.2 926.5,385.2" fill="none" stroke="#ff0000" stroke-width="2.4" stroke-linejoin="round" stroke-linecap="round" shape-rendering="crispEdges"/><polyline points="360.1,268.2 370.0,261.6 380.6,254.6 393.0,248.1 406.3,240.0 415.0,232.6 423.3,226.4 433.0,220.1 443.8,213.5 454.0,205.6 464.3,197.2 474.6,190.5 480.0,183.2 486.1,175.1 492.3,171.4 496.4,171.4 502.5,176.1 507.7,178.8 512.8,175.1 517.9,169.4 523.0,166.5 527.1,166.9 533.3,173.0 539.4,181.2 543.5,190.5 549.7,196.6 558.9,205.4 570.2,205.2 582.5,209.3 598.9,211.4 613.2,213.0 631.6,216.1 643.9,219.5 650.1,224.7 656.2,233.9 660.0,238.5 664.8,246.7 669.6,246.0 676.4,250.1 683.2,248.0 687.3,248.7 694.2,248.4 699.6,245.3 703.7,246.0 711.9,240.2 717.4,240.8 722.8,246.0 728.3,246.0 733.8,252.1 736.5,256.9 740.6,256.9 746.1,252.1 751.5,246.0 758.4,238.5 766.6,233.0 772.0,231.0 783.0,231.0 788.4,234.4 793.9,238.5 799.8,240.4 806.4,256.0 813.0,274.0 819.5,291.2 824.4,280.6 831.0,266.6 839.2,273.2 847.4,274.0 855.6,262.5 862.1,256.0 867.0,258.4 872.0,270.7 876.9,277.3 881.8,267.5 888.4,260.9 894.9,253.5 901.5,256.0 906.4,265.8 913.0,278.1 917.9,292.0 920.3,306.0 922.8,297.0 926.6,290.4" fill="none" stroke="#ff00ff" stroke-width="2.4" stroke-linejoin="round" stroke-linecap="round" shape-rendering="crispEdges"/><polyline points="360.0,353.9 369.2,349.0 383.3,344.0 397.5,340.5 411.7,337.6 420.2,333.0 428.7,332.4 440.0,333.4 452.7,332.0 462.6,334.8 468.3,335.5 472.6,335.2 479.6,332.0 488.1,336.2 496.6,332.7 500.9,331.2 509.4,338.3 512.2,338.3 519.3,332.0 525.7,335.5 532.7,329.6 538.4,330.6 545.5,329.9 552.6,327.7 558.2,329.6 569.6,327.0 579.5,326.6 588.0,329.9 602.2,330.6 612.1,328.7 619.2,333.1 624.8,332.7 630.5,330.6 640.4,326.6 647.5,330.6 654.6,331.7 661.6,330.9 668.7,329.2 675.8,334.5 682.9,332.3 690.7,336.2 696.3,339.7 700.6,336.2 706.2,334.8 712.6,331.0 720.4,331.0 728.9,327.7 733.2,331.2 737.4,336.2 741.7,335.5 747.3,338.3 753.0,339.0 757.2,335.5 764.3,338.3 775.7,339.0 781.3,337.2 789.8,337.2 801.1,339.0 809.6,336.9 818.1,339.0 825.2,338.3 833.7,330.5 842.2,323.0 847.9,325.9 855.0,322.8 862.6,327.3 867.1,332.6 872.3,346.1 875.3,343.1 877.6,334.8 880.6,332.9 885.1,334.1 891.1,327.3 900.2,325.0 906.2,329.5 910.7,344.6 916.7,355.1 919.7,377.7 921.2,395.7 925.7,412.3" fill="none" stroke="#000000" stroke-width="2.4" stroke-linejoin="round" stroke-linecap="round" shape-rendering="crispEdges"/><polyline points="360.1,268.6 370.0,262.0 380.6,255.0 393.0,248.5 406.3,240.4 415.0,233.0 423.3,226.8 433.0,220.5 443.8,213.9 454.0,206.0 464.3,197.7 474.6,190.9 480.0,183.7 486.1,175.5 492.3,171.8 496.4,171.8 502.5,176.5 507.7,179.2 512.8,175.5 517.9,169.8 523.0,166.9 527.1,167.3 533.3,173.4 539.4,181.6 543.5,190.9 549.7,197.0 558.9,205.8 566.1,207.3 570.2,207.9 578.4,212.8 592.7,217.5 603.0,216.5 611.1,218.5 621.4,224.7 631.6,230.8 639.8,226.7 643.9,230.8 648.0,239.0 654.2,239.4 660.3,235.9 663.4,232.3 668.2,226.2 673.7,225.8 677.8,226.6 683.9,226.9 688.0,230.3 692.8,232.3 698.3,233.7 705.1,234.0 711.9,233.3 718.7,233.0 721.5,236.1 725.6,237.1 731.0,237.4 736.5,242.6 742.0,241.9 747.4,242.6 752.9,242.6 757.0,239.8 763.8,237.8 769.3,234.4 774.8,233.0 781.6,233.7 788.4,236.4 793.9,239.8 799.8,241.2 806.4,252.7 814.6,262.5 818.7,269.9 823.6,269.1 829.3,259.3 834.3,254.3 840.8,253.5 847.4,250.2 852.3,247.8 858.9,242.9 864.6,247.8 868.7,257.6 872.8,276.5 876.1,275.7 878.5,264.2 883.4,262.5 890.0,256.8 895.7,253.5 903.1,255.2 908.0,267.5 911.3,274.0 916.2,272.4 921.1,278.1 926.0,283.0" fill="none" stroke="#808080" stroke-width="2.4" stroke-linejoin="round" stroke-linecap="round" shape-rendering="crispEdges"/></g><path d="M677.5 377.5 L682.5 373 V376 H694.5 V373 L699.5 377.5 L694.5 382 V379 H682.5 V382 Z" fill="#fff" stroke="#000" stroke-width="1.1" stroke-linejoin="miter"/><line x1="688.5" y1="154" x2="688.5" y2="455" stroke="#000" stroke-width="1"/></svg>
<div class="t" style="left:336.5px;top:447.84px;font-size:12px;line-height:14px;color:#000;font-weight:normal;font-family:'Liberation Sans', sans-serif;">35</div>
<div class="t" style="left:336.5px;top:427.84px;font-size:12px;line-height:14px;color:#000;font-weight:normal;font-family:'Liberation Sans', sans-serif;">40</div>
<div class="t" style="left:336.5px;top:407.84px;font-size:12px;line-height:14px;color:#000;font-weight:normal;font-family:'Liberation Sans', sans-serif;">45</div>
<div class="t" style="left:336.5px;top:387.84px;font-size:12px;line-height:14px;color:#000;font-weight:normal;font-family:'Liberation Sans', sans-serif;">50</div>
<div class="t" style="left:336.5px;top:367.84px;font-size:12px;line-height:14px;color:#000;font-weight:normal;font-family:'Liberation Sans', sans-serif;">55</div>
<div class="t" style="left:336.5px;top:347.84px;font-size:12px;line-height:14px;color:#000;font-weight:normal;font-family:'Liberation Sans', sans-serif;">60</div>
<div class="t" style="left:336.5px;top:327.84px;font-size:12px;line-height:14px;color:#000;font-weight:normal;font-family:'Liberation Sans', sans-serif;">65</div>
<div class="t" style="left:336.5px;top:307.84px;font-size:12px;line-height:14px;color:#000;font-weight:normal;font-family:'Liberation Sans', sans-serif;">70</div>
<div class="t" style="left:336.5px;top:287.84px;font-size:12px;line-height:14px;color:#000;font-weight:normal;font-family:'Liberation Sans', sans-serif;">75</div>
<div class="t" style="left:336.5px;top:267.84px;font-size:12px;line-height:14px;color:#000;font-weight:normal;font-family:'Liberation Sans', sans-serif;">80</div>
<div class="t" style="left:336.5px;top:247.84px;font-size:12px;line-height:14px;color:#000;font-weight:normal;font-family:'Liberation Sans', sans-serif;">85</div>
<div class="t" style="left:336.5px;top:227.84px;font-size:12px;line-height:14px;color:#000;font-weight:normal;font-family:'Liberation Sans', sans-serif;">90</div>
<div class="t" style="left:336.5px;top:207.84px;font-size:12px;line-height:14px;color:#000;font-weight:normal;font-family:'Liberation Sans', sans-serif;">95</div>
<div class="t" style="left:336.5px;top:187.84px;font-size:12px;line-height:14px;color:#000;font-weight:normal;font-family:'Liberation Sans', sans-serif;">100</div>
<div class="t" style="left:336.5px;top:167.84px;font-size:12px;line-height:14px;color:#000;font-weight:normal;font-family:'Liberation Sans', sans-serif;">105</div>
<div class="t" style="left:336.5px;top:146.84px;font-size:12px;line-height:14px;color:#000;font-weight:normal;font-family:'Liberation Sans', sans-serif;">110</div>
<div class="t" style="left:330.5px;top:459px;width:60px;text-align:center;font-size:12px;line-height:14px;">10</div>
<div class="t" style="left:460.5px;top:459px;width:60px;text-align:center;font-size:12px;line-height:14px;">20</div>
<div class="t" style="left:537.5px;top:459px;width:60px;text-align:center;font-size:12px;line-height:14px;">30</div>
<div class="t" style="left:591.5px;top:459px;width:60px;text-align:center;font-size:12px;line-height:14px;">40</div>
<div class="t" style="left:634.5px;top:459px;width:60px;text-align:center;font-size:12px;line-height:14px;">50</div>
<div class="t" style="left:668.5px;top:459px;width:60px;text-align:center;font-size:12px;line-height:14px;">60</div>
<div class="t" style="left:697.5px;top:459px;width:60px;text-align:center;font-size:12px;line-height:14px;">70</div>
<div class="t" style="left:722.5px;top:459px;width:60px;text-align:center;font-size:12px;line-height:14px;">80</div>
<div class="t" style="left:745.5px;top:459px;width:60px;text-align:center;font-size:12px;line-height:14px;">90</div>
<div class="t" style="left:765.5px;top:459px;width:60px;text-align:center;font-size:12px;line-height:14px;">100</div>
<div class="t" style="left:896.5px;top:459px;width:60px;text-align:center;font-size:12px;line-height:14px;">200</div>
<div class="t" style="left:598.5px;top:472.00px;font-size:13px;line-height:15px;color:#000;font-weight:normal;font-family:'Liberation Sans', sans-serif;letter-spacing:0.150px;">Frequency, Hz</div>
<div class="t" style="left:282px;top:297px;width:80px;height:15px;font-size:13px;line-height:15px;transform:rotate(-90deg);transform-origin:40px 7.5px;text-align:center;">Response, dB</div>
<div class="t" style="left:455.5px;top:110.64px;font-size:27px;line-height:32px;color:#000;font-weight:bold;font-family:'Liberation Serif', serif;letter-spacing:0.200px;">Listening Position Responses</div>
<div style="left:400px;top:498px;width:451px;height:24px;background:#000;"></div>
<div style="left:397px;top:495px;width:451px;height:25px;background:#fff;box-sizing:border-box;border:1px solid #000;"></div>
<div style="left:399px;top:507px;width:17px;height:2px;background:#0000ff;"></div>
<div class="t" style="left:419px;top:500.70px;font-size:13px;line-height:15px;color:#000;font-weight:normal;font-family:'Liberation Serif', serif;">P1-after</div>
<div style="left:470px;top:507px;width:17px;height:2px;background:#00a8a8;"></div>
<div class="t" style="left:490px;top:500.70px;font-size:13px;line-height:15px;color:#000;font-weight:normal;font-family:'Liberation Serif', serif;">P1-before</div>
<div style="left:551px;top:507px;width:17px;height:2px;background:#ff0000;"></div>
<div class="t" style="left:571px;top:500.70px;font-size:13px;line-height:15px;color:#000;font-weight:normal;font-family:'Liberation Serif', serif;">P2-after</div>
<div style="left:622px;top:507px;width:17px;height:2px;background:#ff00ff;"></div>
<div class="t" style="left:642px;top:500.70px;font-size:13px;line-height:15px;color:#000;font-weight:normal;font-family:'Liberation Serif', serif;">P2-before</div>
<div style="left:703px;top:507px;width:17px;height:2px;background:#000;"></div>
<div class="t" style="left:723px;top:500.70px;font-size:13px;line-height:15px;color:#000;font-weight:normal;font-family:'Liberation Serif', serif;">P3-after</div>
<div style="left:774px;top:507px;width:17px;height:2px;background:#808080;"></div>
<div class="t" style="left:794px;top:500.70px;font-size:13px;line-height:15px;color:#000;font-weight:normal;font-family:'Liberation Serif', serif;">P3-before</div>
<div style="left:304px;top:553px;width:642px;height:137px;background:#ffffff;box-sizing:border-box;border:1px solid #a8a8a8;"></div>
<div style="left:462px;top:556px;width:1px;height:24px;background:#e5e5e5;"></div>
<div style="left:924px;top:556px;width:1px;height:24px;background:#e5e5e5;"></div>
<div class="t" style="left:313px;top:560.84px;font-size:12px;line-height:14px;color:#000;font-weight:normal;font-family:'Liberation Sans', sans-serif;letter-spacing:-0.205px;">Graph Data</div>
<div class="t" style="left:468.5px;top:560.84px;font-size:12px;line-height:14px;color:#000;font-weight:normal;font-family:'Liberation Sans', sans-serif;letter-spacing:-0.163px;">Value</div>
<div class="t" style="left:313px;top:582.84px;font-size:12px;line-height:14px;color:#000;font-weight:normal;font-family:'Liberation Sans', sans-serif;letter-spacing:-0.189px;">Frequency</div>
<div class="t" style="left:468.5px;top:582.84px;font-size:12px;line-height:14px;color:#000;font-weight:normal;font-family:'Liberation Sans', sans-serif;letter-spacing:-0.480px;">56.7 Hz</div>
<div class="t" style="left:313px;top:601.84px;font-size:12px;line-height:14px;color:#000;font-weight:normal;font-family:'Liberation Sans', sans-serif;letter-spacing:-0.086px;">P1-after</div>
<div class="t" style="left:468.5px;top:601.84px;font-size:12px;line-height:14px;color:#000;font-weight:normal;font-family:'Liberation Sans', sans-serif;letter-spacing:-0.482px;">64.0 dB</div>
<div class="t" style="left:313px;top:620.84px;font-size:12px;line-height:14px;color:#000;font-weight:normal;font-family:'Liberation Sans', sans-serif;letter-spacing:-0.078px;">P1-before</div>
<div class="t" style="left:468.5px;top:620.84px;font-size:12px;line-height:14px;color:#000;font-weight:normal;font-family:'Liberation Sans', sans-serif;letter-spacing:-0.482px;">74.0 dB</div>
<div class="t" style="left:313px;top:639.84px;font-size:12px;line-height:14px;color:#000;font-weight:normal;font-family:'Liberation Sans', sans-serif;letter-spacing:-0.086px;">P2-after</div>
<div class="t" style="left:468.5px;top:639.84px;font-size:12px;line-height:14px;color:#000;font-weight:normal;font-family:'Liberation Sans', sans-serif;letter-spacing:-0.482px;">65.2 dB</div>
<div class="t" style="left:313px;top:658.84px;font-size:12px;line-height:14px;color:#000;font-weight:normal;font-family:'Liberation Sans', sans-serif;letter-spacing:-0.078px;">P2-before</div>
<div class="t" style="left:468.5px;top:658.84px;font-size:12px;line-height:14px;color:#000;font-weight:normal;font-family:'Liberation Sans', sans-serif;letter-spacing:-0.482px;">86.2 dB</div>
<div style="left:305px;top:674px;width:640px;height:15px;background:#f0f0f0;"></div>
<div style="left:926px;top:554px;width:17px;height:120px;background:#f0f0f0;"></div>
<div style="left:305px;top:554px;width:640px;height:120px;background:transparent;"></div>
<div style="left:927px;top:573px;width:15px;height:59px;background:#cdcdcd;"></div>
<svg style="left:929px;top:561px;" width="9" height="8" viewBox="0 0 9 8"><path d="M1 6.5 L4.5 1.8 L8 6.5" fill="none" stroke="#5a5a5a" stroke-width="1.9"/></svg>
<svg style="left:929px;top:661px;" width="9" height="8" viewBox="0 0 9 8"><path d="M1 1.5 L4.5 6.2 L8 1.5" fill="none" stroke="#5a5a5a" stroke-width="1.9"/></svg>
<div style="left:324px;top:675px;width:570px;height:14px;background:#cdcdcd;"></div>
<svg style="left:313px;top:678px;" width="6" height="8" viewBox="0 0 6 8"><path d="M5 0.8 L1.8 4 L5 7.2" fill="none" stroke="#5a5a5a" stroke-width="1.9"/></svg>
<svg style="left:915px;top:678px;" width="6" height="8" viewBox="0 0 6 8"><path d="M1 0.8 L4.2 4 L1 7.2" fill="none" stroke="#5a5a5a" stroke-width="1.9"/></svg>
<div style="left:304px;top:691px;width:642px;height:20px;background:#f7f7f7;"></div>
<div style="left:304px;top:691px;width:117px;height:1px;background:#000;"></div>
<div style="left:529px;top:691px;width:417px;height:1px;background:#000;"></div>
<div style="left:421px;top:692px;width:109px;height:19px;background:#f0f0f0;box-sizing:border-box;border-right:1px solid #000;border-bottom:1px solid #000;"></div>
<div class="t" style="left:313px;top:693.34px;font-size:12px;line-height:14px;color:#8a8a8a;font-weight:normal;font-family:'Liberation Sans', sans-serif;letter-spacing:-0.055px;">Optimization Status</div>
<div class="t" style="left:427.5px;top:693.34px;font-size:12px;line-height:14px;color:#000;font-weight:normal;font-family:'Liberation Sans', sans-serif;letter-spacing:-0.199px;">Graph Cursor Data</div>
<div style="left:950px;top:101px;width:249px;height:546px;background:#ffffff;"></div>
<div style="left:1099px;top:101px;width:1px;height:546px;background:#e0e0e0;"></div>
<div style="left:950px;top:101px;width:19px;height:380px;background:#e0e0e0;"></div>
<div style="left:950px;top:101px;width:249px;height:19px;background:#e0e0e0;"></div>
<svg style="left:955px;top:105px;" width="9" height="9" viewBox="0 0 9 9"><rect x="0.5" y="0.5" width="8" height="8" rx="1" fill="url(#gbox)" stroke="#8c8c8c"/><rect x="2" y="4" width="5" height="1" fill="#3858a8"/></svg>
<div class="t" style="left:973.5px;top:103.04px;font-size:12px;line-height:14px;color:#000;font-weight:bold;font-family:'Liberation Sans', sans-serif;letter-spacing:-0.050px;">Filter Information</div>
<div style="left:969px;top:138px;width:230px;height:1px;background:#e0e0e0;"></div>
<div class="t" style="left:973.5px;top:122.04px;font-size:12px;line-height:14px;color:#000;font-weight:normal;font-family:'Liberation Sans', sans-serif;letter-spacing:-0.062px;">Filter type</div>
<div class="t" style="left:1104px;top:122.04px;font-size:12px;line-height:14px;color:#000;font-weight:normal;font-family:'Liberation Sans', sans-serif;letter-spacing:-0.335px;">Parametric EQ (...</div>
<div style="left:969px;top:157px;width:230px;height:1px;background:#e0e0e0;"></div>
<div class="t" style="left:973.5px;top:141.04px;font-size:12px;line-height:14px;color:#000;font-weight:normal;font-family:'Liberation Sans', sans-serif;letter-spacing:-0.188px;">Reference designator</div>
<div class="t" style="left:1104px;top:141.04px;font-size:12px;line-height:14px;color:#000;font-weight:normal;font-family:'Liberation Sans', sans-serif;letter-spacing:-0.896px;">FL1</div>
<div style="left:969px;top:176px;width:230px;height:1px;background:#e0e0e0;"></div>
<div class="t" style="left:973.5px;top:160.04px;font-size:12px;line-height:14px;color:#000;font-weight:normal;font-family:'Liberation Sans', sans-serif;letter-spacing:0.070px;">Configuration name</div>
<div class="t" style="left:1104px;top:160.04px;font-size:12px;line-height:14px;color:#000;font-weight:normal;font-family:'Liberation Sans', sans-serif;letter-spacing:-0.034px;">Iteration 4</div>
<div style="left:969px;top:195px;width:230px;height:1px;background:#e0e0e0;"></div>
<div class="t" style="left:973.5px;top:179.04px;font-size:12px;line-height:14px;color:#000;font-weight:normal;font-family:'Liberation Sans', sans-serif;letter-spacing:-0.172px;">Channel name</div>
<div class="t" style="left:1104px;top:179.04px;font-size:12px;line-height:14px;color:#000;font-weight:normal;font-family:'Liberation Sans', sans-serif;letter-spacing:-0.472px;">Sub 1</div>
<div style="left:950px;top:196px;width:249px;height:19px;background:#e0e0e0;"></div>
<svg style="left:955px;top:200px;" width="9" height="9" viewBox="0 0 9 9"><rect x="0.5" y="0.5" width="8" height="8" rx="1" fill="url(#gbox)" stroke="#8c8c8c"/><rect x="2" y="4" width="5" height="1" fill="#3858a8"/></svg>
<div class="t" style="left:973.5px;top:198.04px;font-size:12px;line-height:14px;color:#000;font-weight:bold;font-family:'Liberation Sans', sans-serif;letter-spacing:-0.050px;">Center freq (Hz)</div>
<div style="left:969px;top:233px;width:230px;height:1px;background:#e0e0e0;"></div>
<div class="t" style="left:973.5px;top:217.04px;font-size:12px;line-height:14px;color:#000;font-weight:normal;font-family:'Liberation Sans', sans-serif;letter-spacing:-0.163px;">Value</div>
<div class="t" style="left:1104px;top:217.04px;font-size:12px;line-height:14px;color:#000;font-weight:normal;font-family:'Liberation Sans', sans-serif;letter-spacing:-0.590px;">19.7</div>
<div style="left:969px;top:252px;width:230px;height:1px;background:#e0e0e0;"></div>
<div class="t" style="left:973.5px;top:236.04px;font-size:12px;line-height:14px;color:#000;font-weight:normal;font-family:'Liberation Sans', sans-serif;letter-spacing:0.100px;">Minimum value</div>
<div class="t" style="left:1104px;top:236.04px;font-size:12px;line-height:14px;color:#000;font-weight:normal;font-family:'Liberation Sans', sans-serif;letter-spacing:-0.590px;">15.0</div>
<div style="left:969px;top:271px;width:230px;height:1px;background:#e0e0e0;"></div>
<div class="t" style="left:973.5px;top:255.04px;font-size:12px;line-height:14px;color:#000;font-weight:normal;font-family:'Liberation Sans', sans-serif;letter-spacing:-0.002px;">Maximum value</div>
<div class="t" style="left:1104px;top:255.04px;font-size:12px;line-height:14px;color:#000;font-weight:normal;font-family:'Liberation Sans', sans-serif;letter-spacing:-0.606px;">190.0</div>
<div style="left:969px;top:290px;width:230px;height:1px;background:#e0e0e0;"></div>
<div class="t" style="left:973.5px;top:274.04px;font-size:12px;line-height:14px;color:#000;font-weight:normal;font-family:'Liberation Sans', sans-serif;letter-spacing:0.064px;">Optimization allowed</div>
<div class="t" style="left:1104px;top:274.04px;font-size:12px;line-height:14px;color:#000;font-weight:normal;font-family:'Liberation Sans', sans-serif;letter-spacing:-0.309px;">True</div>
<div style="left:950px;top:291px;width:249px;height:19px;background:#e0e0e0;"></div>
<svg style="left:955px;top:295px;" width="9" height="9" viewBox="0 0 9 9"><rect x="0.5" y="0.5" width="8" height="8" rx="1" fill="url(#gbox)" stroke="#8c8c8c"/><rect x="2" y="4" width="5" height="1" fill="#3858a8"/></svg>
<div class="t" style="left:973.5px;top:293.04px;font-size:12px;line-height:14px;color:#000;font-weight:bold;font-family:'Liberation Sans', sans-serif;letter-spacing:-0.050px;">Boost (dB)</div>
<div style="left:969px;top:328px;width:230px;height:1px;background:#e0e0e0;"></div>
<div class="t" style="left:973.5px;top:312.04px;font-size:12px;line-height:14px;color:#000;font-weight:normal;font-family:'Liberation Sans', sans-serif;letter-spacing:-0.163px;">Value</div>
<div class="t" style="left:1104px;top:312.04px;font-size:12px;line-height:14px;color:#000;font-weight:normal;font-family:'Liberation Sans', sans-serif;letter-spacing:-0.272px;">-1.87</div>
<div style="left:969px;top:347px;width:230px;height:1px;background:#e0e0e0;"></div>
<div class="t" style="left:973.5px;top:331.04px;font-size:12px;line-height:14px;color:#000;font-weight:normal;font-family:'Liberation Sans', sans-serif;letter-spacing:0.100px;">Minimum value</div>
<div class="t" style="left:1104px;top:331.04px;font-size:12px;line-height:14px;color:#000;font-weight:normal;font-family:'Liberation Sans', sans-serif;letter-spacing:-0.339px;">-26.00</div>
<div style="left:969px;top:366px;width:230px;height:1px;background:#e0e0e0;"></div>
<div class="t" style="left:973.5px;top:350.04px;font-size:12px;line-height:14px;color:#000;font-weight:normal;font-family:'Liberation Sans', sans-serif;letter-spacing:-0.002px;">Maximum value</div>
<div class="t" style="left:1104px;top:350.04px;font-size:12px;line-height:14px;color:#000;font-weight:normal;font-family:'Liberation Sans', sans-serif;letter-spacing:-0.590px;">3.00</div>
<div style="left:969px;top:385px;width:230px;height:1px;background:#e0e0e0;"></div>
<div class="t" style="left:973.5px;top:369.04px;font-size:12px;line-height:14px;color:#000;font-weight:normal;font-family:'Liberation Sans', sans-serif;letter-spacing:0.064px;">Optimization allowed</div>
<div class="t" style="left:1104px;top:369.04px;font-size:12px;line-height:14px;color:#000;font-weight:normal;font-family:'Liberation Sans', sans-serif;letter-spacing:-0.309px;">True</div>
<div style="left:950px;top:386px;width:249px;height:19px;background:#e0e0e0;"></div>
<svg style="left:955px;top:390px;" width="9" height="9" viewBox="0 0 9 9"><rect x="0.5" y="0.5" width="8" height="8" rx="1" fill="url(#gbox)" stroke="#8c8c8c"/><rect x="2" y="4" width="5" height="1" fill="#3858a8"/></svg>
<div class="t" style="left:973.5px;top:388.04px;font-size:12px;line-height:14px;color:#000;font-weight:bold;font-family:'Liberation Sans', sans-serif;letter-spacing:-0.050px;">Q</div>
<div style="left:969px;top:423px;width:230px;height:1px;background:#e0e0e0;"></div>
<div class="t" style="left:973.5px;top:407.04px;font-size:12px;line-height:14px;color:#000;font-weight:normal;font-family:'Liberation Sans', sans-serif;letter-spacing:-0.163px;">Value</div>
<div class="t" style="left:1104px;top:407.04px;font-size:12px;line-height:14px;color:#000;font-weight:normal;font-family:'Liberation Sans', sans-serif;letter-spacing:-0.617px;">12.783</div>
<div style="left:969px;top:442px;width:230px;height:1px;background:#e0e0e0;"></div>
<div class="t" style="left:973.5px;top:426.04px;font-size:12px;line-height:14px;color:#000;font-weight:normal;font-family:'Liberation Sans', sans-serif;letter-spacing:0.100px;">Minimum value</div>
<div class="t" style="left:1104px;top:426.04px;font-size:12px;line-height:14px;color:#000;font-weight:normal;font-family:'Liberation Sans', sans-serif;letter-spacing:-0.606px;">1.000</div>
<div style="left:969px;top:461px;width:230px;height:1px;background:#e0e0e0;"></div>
<div class="t" style="left:973.5px;top:445.04px;font-size:12px;line-height:14px;color:#000;font-weight:normal;font-family:'Liberation Sans', sans-serif;letter-spacing:-0.002px;">Maximum value</div>
<div class="t" style="left:1104px;top:445.04px;font-size:12px;line-height:14px;color:#000;font-weight:normal;font-family:'Liberation Sans', sans-serif;letter-spacing:-0.617px;">25.000</div>
<div style="left:969px;top:480px;width:230px;height:1px;background:#e0e0e0;"></div>
<div class="t" style="left:973.5px;top:464.04px;font-size:12px;line-height:14px;color:#000;font-weight:normal;font-family:'Liberation Sans', sans-serif;letter-spacing:0.064px;">Optimization allowed</div>
<div class="t" style="left:1104px;top:464.04px;font-size:12px;line-height:14px;color:#000;font-weight:normal;font-family:'Liberation Sans', sans-serif;letter-spacing:-0.309px;">True</div>
<div style="left:950px;top:647px;width:249px;height:65px;background:#f0f0f0;"></div>
<div style="left:951px;top:651px;width:247px;height:60px;background:#f0f0f0;box-sizing:border-box;border:1px solid #a8a8a8;"></div>
<div style="left:1px;top:712px;width:1198px;height:1px;background:#dadada;"></div>
<div style="left:1px;top:713px;width:1198px;height:18px;background:#f0f0f0;"></div>
<div style="left:1196px;top:721px;width:2px;height:2px;background:#a8a8a8;"></div>
<div style="left:1193px;top:724px;width:2px;height:2px;background:#a8a8a8;"></div>
<div style="left:1196px;top:724px;width:2px;height:2px;background:#a8a8a8;"></div>
<div style="left:1190px;top:727px;width:2px;height:2px;background:#a8a8a8;"></div>
<div style="left:1193px;top:727px;width:2px;height:2px;background:#a8a8a8;"></div>
<div style="left:1196px;top:727px;width:2px;height:2px;background:#a8a8a8;"></div>
</body></html>
